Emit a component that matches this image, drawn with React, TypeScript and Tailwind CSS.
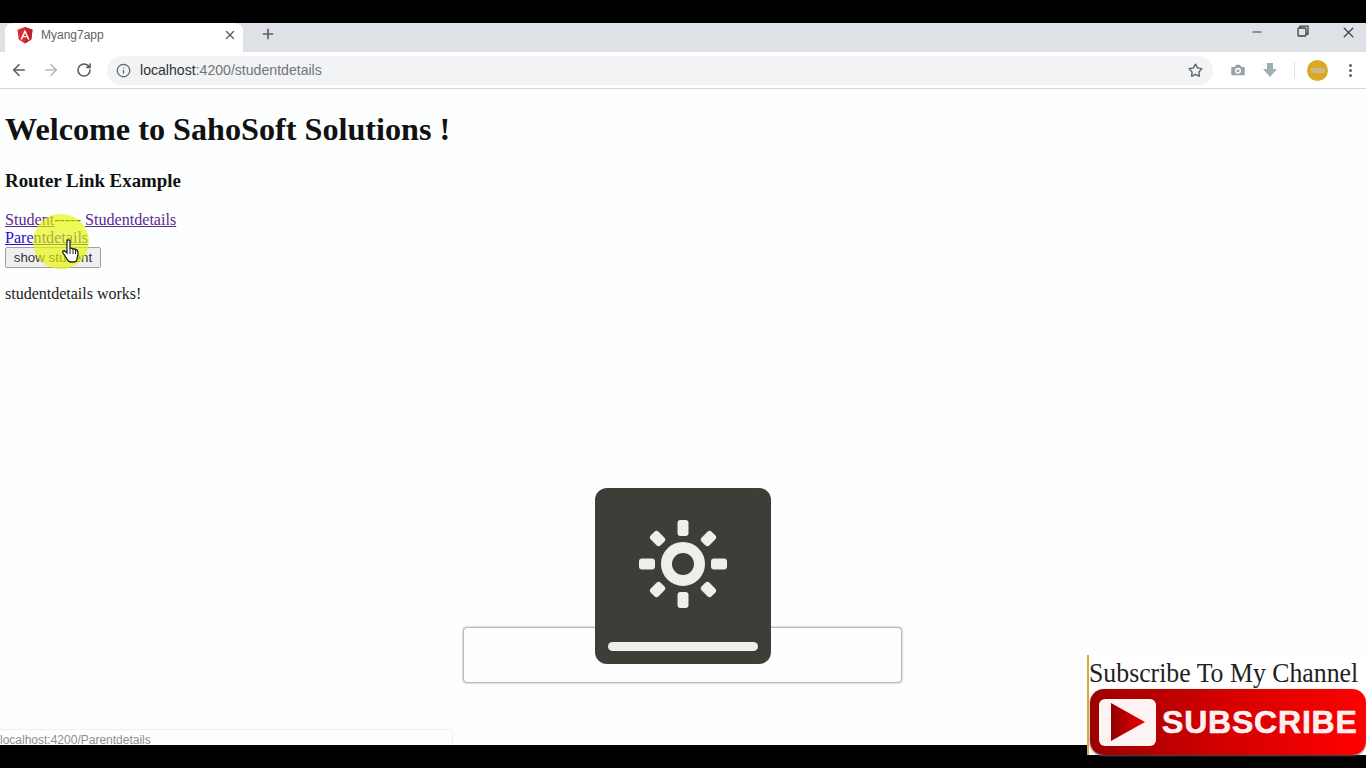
import { ArrowLeft, ArrowRight, RotateCw, Info, Star, X, Plus, Minus, Camera } from 'lucide-react';

function AngularLogo() {
  return (
    <svg width="16" height="17" viewBox="0 0 16 17">
      <path d="M8 0 L0.5 2.7 L1.7 12.6 L8 16.4 L14.3 12.6 L15.5 2.7 Z" fill="#dd2c35" />
      <path d="M8 0 L15.5 2.7 L14.3 12.6 L8 16.4 Z" fill="#c3212c" />
      <path d="M8 2.4 L3.4 12.6 H5.2 L6.1 10.3 H9.9 L10.8 12.6 H12.6 Z M8 6 L9.3 8.9 H6.7 Z" fill="#fff" fillRule="evenodd" />
    </svg>
  );
}

function BrightnessIcon() {
  const straight = [0, 90, 180, 270];
  const diagonal = [45, 135, 225, 315];
  return (
    <svg width="90" height="90" viewBox="0 0 90 90">
      {straight.map(r => (
        <rect key={r} x="39.5" y="1" width="11" height="16" rx="3" fill="#eeeeec" transform={`rotate(${r} 45 45)`} />
      ))}
      {diagonal.map(r => (
        <rect key={r} x="39.5" y="2" width="11" height="14" rx="3" fill="#eeeeec" transform={`rotate(${r} 45 45)`} />
      ))}
      <circle cx="45" cy="45" r="16.5" fill="none" stroke="#eeeeec" strokeWidth="11" />
    </svg>
  );
}

function Toolbar() {
  return (
    <div className="h-[37px] bg-white border-b border-[#d4d5d7] flex items-center shrink-0">
      <ArrowLeft size={18} strokeWidth={2.2} className="ml-[10px] text-[#5a5d61]" />
      <ArrowRight size={18} strokeWidth={2.2} className="ml-[14px] text-[#b5b8bb]" />
      <RotateCw size={16} strokeWidth={2.4} className="ml-[16px] text-[#5a5d61]" />
      <div className="ml-[15px] w-[1106px] h-[29px] rounded-full bg-[#f1f3f4] flex items-center pl-[9px] pr-[10px]">
        <Info size={15} strokeWidth={2} className="text-[#5f6368]" />
        <span className="ml-[9px] mt-[2px] text-[14.1px] text-[#303134]">localhost</span>
        <span className="mt-[2px] text-[14.1px] text-[#70757a]">:4200/studentdetails</span>
        <Star size={15} strokeWidth={2.2} className="ml-auto text-[#5f6368]" />
      </div>
      <Camera size={18} strokeWidth={2} fill="#9aa0a6" className="ml-[16px] text-white" />
      <svg width="16" height="16" viewBox="0 0 16 16" className="ml-[15px]">
        <path d="M5 1 H11 V7 H15 L8 15 L1 7 H5 Z" fill="#9fb0b3" />
      </svg>
      <div className="ml-[16px] w-px h-[16px] bg-[#dfe1e3]" />
      <div className="ml-[12px] w-[21px] h-[21px] rounded-full bg-[#d9a91f] flex items-center justify-center">
        <div className="w-[14px] h-[5px] bg-[#c9b98a]" />
      </div>
      <div className="ml-[21px] flex flex-col gap-[2px]">
        <div className="w-[3px] h-[3px] rounded-full bg-[#5f6368]" />
        <div className="w-[3px] h-[3px] rounded-full bg-[#5f6368]" />
        <div className="w-[3px] h-[3px] rounded-full bg-[#5f6368]" />
      </div>
    </div>
  );
}

export default function App() {
  return (
    <div className="w-[1366px] h-[768px] bg-black flex flex-col overflow-hidden relative">
      <div className="h-[23px] shrink-0" />

      {/* Tab strip */}
      <div className="h-[29px] bg-[#dee1e6] flex shrink-0 font-['Liberation_Sans',sans-serif]">
        <div className="ml-[5px] w-[238px] bg-white rounded-t-[8px] flex items-center pl-[12px] pr-[6px] pb-[5px]">
          <AngularLogo />
          <span className="ml-[8px] text-[12px] text-[#5f6368]">Myang7app</span>
          <X size={14} strokeWidth={2.4} className="ml-auto text-[#5f6368]" />
        </div>
        <Plus size={16} strokeWidth={2.4} className="ml-[17px] mt-[3px] text-[#5a5d61]" />
        <div className="ml-auto flex items-start pt-[2px] text-[#3c4043]">
          <Minus size={14} strokeWidth={2} className="mr-[33px]" />
          <svg width="12" height="12" viewBox="0 0 12 12" className="mr-[31px]" fill="none" stroke="#3c4043" strokeWidth="1.3">
            <rect x="1" y="3" width="8" height="8" rx="1" />
            <path d="M3 3 V1.2 H11 V9 H9" />
          </svg>
          <X size={17} strokeWidth={1.8} className="mr-[9px] -mt-[1px]" />
        </div>
      </div>

      <div className="font-['Liberation_Sans',sans-serif]">
        <Toolbar />
      </div>

      {/* Page */}
      <div className="h-[656px] bg-[#fdfefe] shrink-0 px-[5px] pt-[22px] font-['Liberation_Serif',serif] text-black relative">
        <h1 className="text-[32.2px] font-bold leading-[37px] text-[#111]">Welcome to SahoSoft Solutions !</h1>
        <h3 className="mt-[22px] text-[18.9px] font-bold leading-[22px] text-[#111]">Router Link Example</h3>
        <div className="mt-[19px] text-[16.1px] leading-[18px] text-[#222]">
          <a className="underline text-[#5c2a8f]">Student</a>----- <a className="underline text-[#5c2a8f]">Studentdetails</a>
        </div>
        <div className="text-[16.1px] leading-[18px]">
          <a className="underline text-[#2a0fd0]">Parentdetails</a>
        </div>
        <button className="block h-[21px] w-[96px] bg-[#efefef] border border-[#a0a0a0] rounded-[2px] text-[13.3px] leading-none text-[#333] font-['Liberation_Sans',sans-serif]">
          show student
        </button>
        <p className="mt-[17px] text-[16px] leading-[18px] text-[#222]">studentdetails works!</p>

        {/* Cursor highlight */}
        <div className="absolute left-[33px] top-[125px] w-[56px] h-[55px] rounded-full bg-[#e6f800]/65" />
        <svg width="18" height="24" viewBox="0 0 18 24" className="absolute left-[62px] top-[150px]">
          <path d="M5 2 C5 0.5 8 0.5 8 2 V9 L14 10.5 C16 11 16 13 16 15 L15 20 C15 22 13 23 11 23 H9 C7 23 6 22 5 20 L1 14 C0 12 2 11 3.5 12.5 L5 14 Z" fill="#fff" stroke="#222" strokeWidth="1.3" />
          <path d="M8 9 V15 M11 10 V15 M13.5 10.5 V15" stroke="#222" strokeWidth="1" />
        </svg>

        {/* Brightness OSD */}
        <div className="absolute left-[463px] top-[538px] w-[439px] h-[56px] bg-[#fdfefe] border border-[#b9bbb9] rounded-[4px] shadow-[0_0_2px_#9a9c9a]" />
        <div className="absolute left-[595px] top-[399px] w-[176px] h-[176px] bg-[#3f3d38] rounded-[12px] flex flex-col items-center">
          <div className="mt-[31px]">
            <BrightnessIcon />
          </div>
          <div className="mt-[33px] w-[150px] h-[9px] rounded-full bg-[#eeeeec]" />
        </div>

        {/* Link status bubble */}
        <div className="absolute left-0 bottom-0 w-[453px] h-[16px] bg-[#fdfefe] border-t border-r border-[#eeefef] rounded-tr-[3px] font-['Liberation_Sans',sans-serif] text-[12px] leading-[20px] text-[#8a8f94] overflow-hidden">
          localhost:4200/Parentdetails
        </div>

        {/* Subscribe overlay */}
        <div className="absolute left-[1087px] top-[566px] w-[279px] h-[100px] bg-white border-l-2 border-[#d9ab3c] font-['Liberation_Serif',serif]">
          <div className="pt-[3px] text-[27px] leading-[30px] text-[#222] whitespace-nowrap scale-x-[0.955] origin-left">Subscribe To My Channel</div>
          <div className="ml-[1px] mt-[1px] h-[66px] rounded-[14px] bg-gradient-to-r from-[#9c0000] via-[#d60000] to-[#ff0000] flex items-center shadow-[0_1px_2px_#555]">
            <div className="ml-[9px] w-[57px] h-[47px] bg-[#fdf3f3] rounded-[6px] flex items-center justify-center">
              <svg width="36" height="40" viewBox="0 0 36 40">
                <defs>
                  <linearGradient id="playFill" x1="0" x2="1" y1="0" y2="0">
                    <stop offset="0" stopColor="#8f0000" />
                    <stop offset="1" stopColor="#f00000" />
                  </linearGradient>
                </defs>
                <path d="M1 1 L35 20 L1 39 Z" fill="url(#playFill)" />
              </svg>
            </div>
            <span className="ml-[6px] text-[32px] font-bold tracking-[0.8px] text-[#fdf0f0] [-webkit-text-stroke:0.6px_#fdf0f0] font-['Liberation_Sans',sans-serif] whitespace-nowrap">SUBSCRIBE</span>
          </div>
        </div>
      </div>
    </div>
  );
}
